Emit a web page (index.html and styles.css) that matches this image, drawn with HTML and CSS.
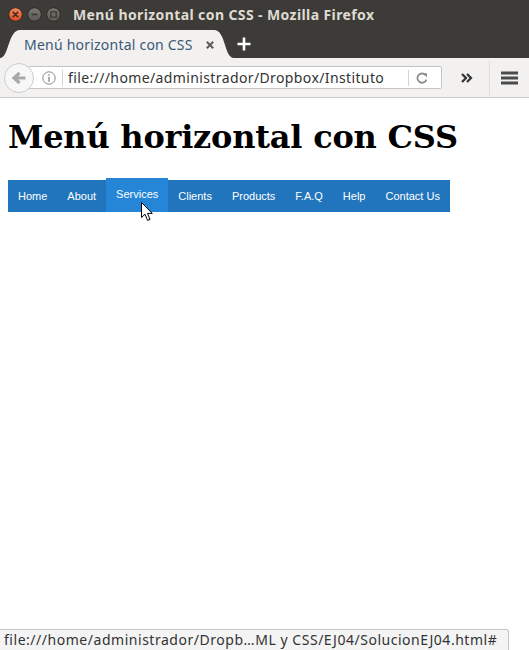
FILE: index.html
```html
<!DOCTYPE html>
<html lang="es">
<head>
<meta charset="utf-8">
<title>Menú horizontal con CSS</title>
<link rel="stylesheet" href="styles.css">
</head>
<body>
<div class="window">
  <div class="titlebar">
    <svg class="wbtns" width="62" height="16" viewBox="0 0 62 16">
      <defs>
        <linearGradient id="gc" x1="0" y1="0" x2="0" y2="1">
          <stop offset="0" stop-color="#f48a5e"/>
          <stop offset="1" stop-color="#df4a1c"/>
        </linearGradient>
        <linearGradient id="gg" x1="0" y1="0" x2="0" y2="1">
          <stop offset="0" stop-color="#77766f"/>
          <stop offset="1" stop-color="#5b5a55"/>
        </linearGradient>
      </defs>
      <circle cx="7.5" cy="7.5" r="6.8" fill="url(#gc)" stroke="#2c2b28" stroke-width="1"/>
      <path d="M5.2 5.2 L9.8 9.8 M9.8 5.2 L5.2 9.8" stroke="#3a2a22" stroke-width="1.6" stroke-linecap="round"/>
      <circle cx="26.5" cy="7.5" r="6.8" fill="url(#gg)" stroke="#2c2b28" stroke-width="1"/>
      <path d="M23.5 7.5 H29.5" stroke="#3a3935" stroke-width="1.6"/>
      <circle cx="45.5" cy="7.5" r="6.8" fill="url(#gg)" stroke="#2c2b28" stroke-width="1"/>
      <rect x="42.8" y="4.8" width="5.4" height="5.4" fill="none" stroke="#3a3935" stroke-width="1.3"/>
    </svg>
    <span class="wtitle">Menú horizontal con CSS - Mozilla Firefox</span>
  </div>
  <div class="tabbar">
    <div class="tab">
      <svg class="tabshape" width="234" height="28" viewBox="0 0 234 28">
        <path d="M0 28 C9 28 8 0 20 0 L214 0 C226 0 224 28 234 28 Z" fill="#f2f1f0"/>
      </svg>
      <span class="tabtitle">Menú horizontal con CSS</span>
      <svg class="tabclose" width="8" height="8" viewBox="0 0 8 8">
        <path d="M0.8 0.8 L7.2 7.2 M7.2 0.8 L0.8 7.2" stroke="#5c5c5c" stroke-width="2"/>
      </svg>
    </div>
    <svg class="newtab" width="14" height="14" viewBox="0 0 14 14">
      <path d="M7 0.5 V13.5 M0.5 7 H13.5" stroke="#ffffff" stroke-width="2.6"/>
    </svg>
  </div>
  <div class="toolbar">
    <div class="back">
      <svg width="16" height="14" viewBox="0 0 16 14">
        <path d="M14.5 7 H4 M8.5 2 L3 7 L8.5 12" fill="none" stroke="#a9a9a9" stroke-width="3.2" stroke-linejoin="miter"/>
      </svg>
    </div>
    <div class="urlbar">
      <svg class="info" width="14" height="14" viewBox="0 0 14 14">
        <circle cx="7" cy="7" r="6.2" fill="none" stroke="#8a8a8a" stroke-width="1"/>
        <rect x="6.3" y="3.2" width="1.4" height="1.4" fill="#8a8a8a"/>
        <rect x="6.3" y="5.8" width="1.4" height="5" fill="#8a8a8a"/>
      </svg>
      <span class="usep"></span>
      <span class="url">file:///home/administrador/Dropbox/Instituto</span>
      <span class="usep rsep"></span>
      <svg class="reload" width="12" height="12" viewBox="0 0 12 12">
        <path d="M9.6 3.2 A4.6 4.6 0 1 0 10.4 7.6" fill="none" stroke="#8d8d8d" stroke-width="1.8"/>
        <path d="M7 1.2 L11 1.2 L11 5.2 Z" fill="#8d8d8d"/>
      </svg>
    </div>
    <svg class="overflow" width="12" height="10" viewBox="0 0 12 10">
      <path d="M1 1 L5 5 L1 9 M6 1 L10 5 L6 9" fill="none" stroke="#333333" stroke-width="2.2"/>
    </svg>
    <span class="tsep"></span>
    <svg class="burger" width="17" height="14" viewBox="0 0 17 14">
      <rect x="0" y="0.5" width="17" height="3" fill="#4a4a4a"/>
      <rect x="0" y="5.5" width="17" height="3" fill="#4a4a4a"/>
      <rect x="0" y="10.5" width="17" height="3" fill="#4a4a4a"/>
    </svg>
  </div>
  <div class="content">
    <h1 class="heading">Menú horizontal con CSS</h1>
    <ul class="menu">
      <li><a href="#">Home</a></li>
      <li><a href="#">About</a></li>
      <li><a href="#" class="hover">Services</a></li>
      <li><a href="#">Clients</a></li>
      <li><a href="#">Products</a></li>
      <li><a href="#">F.A.Q</a></li>
      <li><a href="#">Help</a></li>
      <li><a href="#">Contact Us</a></li>
    </ul>
  </div>
  <div class="status">file:///home/administrador/Dropb…ML y CSS/EJ04/SolucionEJ04.html#</div>
  <svg class="cursor" width="13" height="20" viewBox="0 0 13 20">
    <path d="M0.5 0.5 L0.5 15.5 L4 12.2 L6.6 18.4 L9 17.4 L6.5 11.4 L11.3 11.4 Z" fill="#ffffff" stroke="#000000" stroke-width="1" stroke-linejoin="miter"/>
  </svg>
</div>
</body>
</html>
```
FILE: styles.css
```css
* { box-sizing: border-box; }
html, body { margin: 0; padding: 0; }
body { width: 529px; height: 650px; overflow: hidden; background: #fff; }

.window {
  position: relative;
  width: 529px;
  height: 650px;
  display: flex;
  flex-direction: column;
  background: #ffffff;
  font-family: "Noto Sans", "Open Sans", sans-serif;
}

.titlebar {
  height: 28px;
  flex: none;
  background: #3c3b37;
  display: flex;
  align-items: center;
  padding-left: 8px;
}
.wbtns { display: block; margin-top: 1px; }
.wtitle {
  margin-left: 3px;
  color: #dfdbd2;
  font-weight: bold;
  font-size: 14px;
  letter-spacing: 0.4px;
  white-space: nowrap;
}

.tabbar {
  height: 30px;
  flex: none;
  background: #3c3b37;
  display: flex;
  align-items: flex-end;
}
.tab {
  position: relative;
  width: 234px;
  height: 28px;
  display: flex;
  align-items: center;
}
.tabshape { position: absolute; left: 0; top: 0; }
.tabtitle {
  position: relative;
  margin-left: 24px;
  color: #3b5876;
  font-size: 14px;
  letter-spacing: 0.22px;
  white-space: nowrap;
  width: 182px;
}
.tabclose { position: relative; margin-top: 1px; }
.newtab { margin-left: 3px; margin-bottom: 7px; }

.toolbar {
  height: 40px;
  flex: none;
  background: #f2f1f0;
  border-bottom: 1px solid #cfcdca;
  display: flex;
  align-items: center;
  padding-left: 4px;
}
.back {
  position: relative;
  z-index: 1;
  width: 30px;
  height: 30px;
  border-radius: 50%;
  border: 1px solid #cdcdcd;
  background: #f7f7f7;
  display: flex;
  align-items: center;
  justify-content: center;
}
.urlbar {
  margin-left: -6px;
  width: 414px;
  height: 23px;
  background: #ffffff;
  border: 1px solid #c4c4c4;
  border-radius: 2px;
  display: flex;
  align-items: center;
  padding-left: 13px;
}
.info { display: block; flex: none; }
.usep {
  width: 1px;
  height: 16px;
  background: #d4d4d4;
  margin-left: 6px;
  flex: none;
}
.url {
  margin-left: 5px;
  width: 318px;
  overflow: hidden;
  white-space: nowrap;
  font-size: 14px;
  letter-spacing: 0.38px;
  color: #333333;
  flex: none;
}
.rsep { margin-left: 22px; }
.reload { margin-left: 7px; flex: none; }
.overflow { margin-left: 19px; }
.tsep {
  width: 1px;
  height: 34px;
  background: #dedddb;
  margin-left: 16px;
}
.burger { margin-left: 11px; }

.content {
  flex: 1;
  padding: 0 8px;
}
.heading {
  margin: 21px 0 0;
  font-family: "DejaVu Serif", serif;
  font-weight: bold;
  font-size: 32px;
  letter-spacing: -0.22px;
  line-height: 37px;
  color: #000;
}
.menu {
  list-style: none;
  margin: 24px 0 0;
  padding: 0;
  display: flex;
  width: fit-content;
  background: #2175bc;
}
.menu a {
  display: block;
  padding: 0 10px;
  line-height: 32px;
  height: 32px;
  font-family: "Liberation Sans", Arial, sans-serif;
  font-size: 11px;
  color: #ffffff;
  text-decoration: none;
}
.menu a.hover {
  background: #2586d7;
  margin-top: -2px;
  height: 34px;
}

.status {
  position: absolute;
  left: 0;
  bottom: 0;
  width: 509px;
  height: 21px;
  background: #f4f4f4;
  border-top: 1px solid #c6c6c6;
  border-right: 1px solid #c6c6c6;
  border-top-right-radius: 3px;
  font-size: 14px;
  letter-spacing: 0.53px;
  color: #333333;
  padding-left: 4px;
  line-height: 19px;
  white-space: nowrap;
  overflow: hidden;
}

.cursor {
  position: absolute;
  left: 141px;
  top: 202px;
}
```
